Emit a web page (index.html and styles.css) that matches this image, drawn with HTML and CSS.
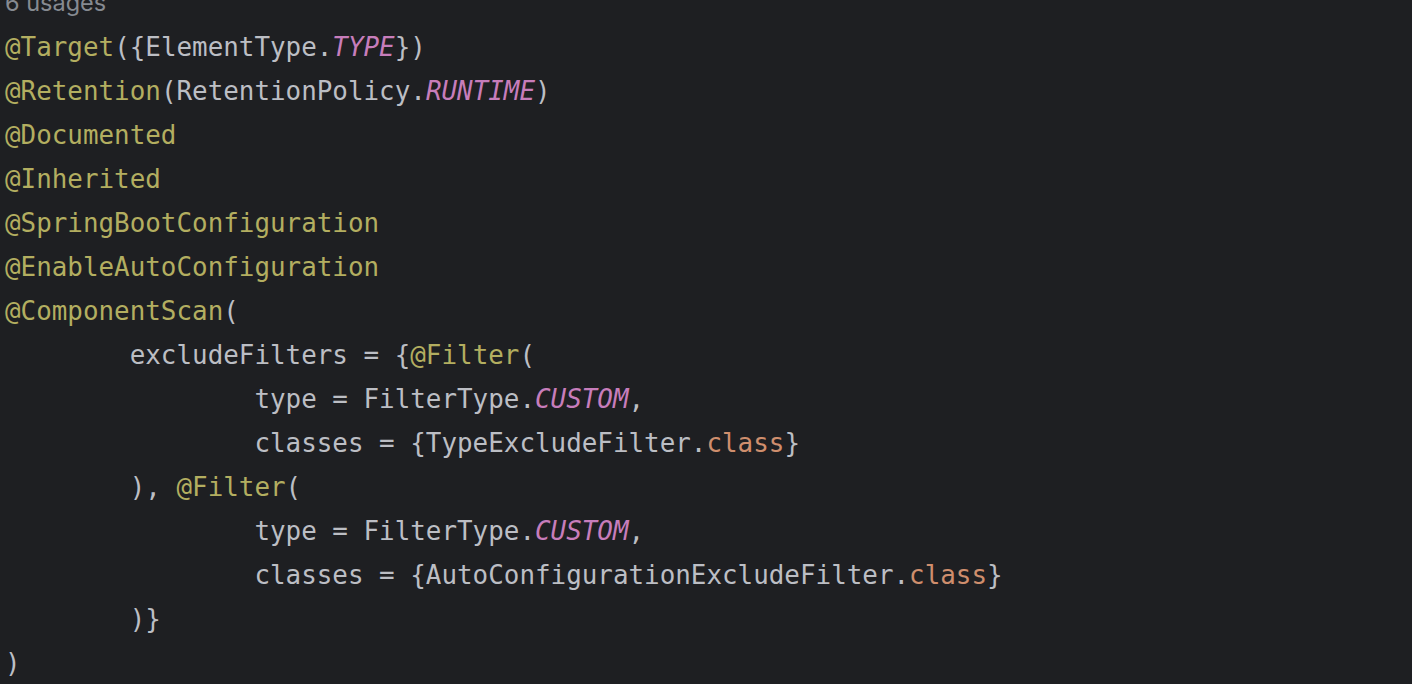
FILE: index.html
```html
<!DOCTYPE html>
<html>
<head>
<meta charset="utf-8">
<link rel="stylesheet" href="styles.css">
</head>
<body>
<div class="editor">
  <div class="usages">6 usages</div>
  <div class="code">
<div class="line"><span class="ann">@Target</span>({ElementType.<span class="const">TYPE</span>})</div>
<div class="line"><span class="ann">@Retention</span>(RetentionPolicy.<span class="const">RUNTIME</span>)</div>
<div class="line"><span class="ann">@Documented</span></div>
<div class="line"><span class="ann">@Inherited</span></div>
<div class="line"><span class="ann">@SpringBootConfiguration</span></div>
<div class="line"><span class="ann">@EnableAutoConfiguration</span></div>
<div class="line"><span class="ann">@ComponentScan</span>(</div>
<div class="line">        excludeFilters = {<span class="ann">@Filter</span>(</div>
<div class="line">                type = FilterType.<span class="const">CUSTOM</span>,</div>
<div class="line">                classes = {TypeExcludeFilter.<span class="kw">class</span>}</div>
<div class="line">        ), <span class="ann">@Filter</span>(</div>
<div class="line">                type = FilterType.<span class="const">CUSTOM</span>,</div>
<div class="line">                classes = {AutoConfigurationExcludeFilter.<span class="kw">class</span>}</div>
<div class="line">        )}</div>
<div class="line">)</div>
  </div>
</div>
</body>
</html>
```
FILE: styles.css
```css
html, body {
  margin: 0;
  padding: 0;
  background: #1e1f22;
  height: 100%;
  overflow: hidden;
}
.editor {
  padding-left: 5px;
}
.usages {
  font-family: Inter, "Noto Sans", sans-serif;
  font-size: 23.5px;
  color: #868a91;
  height: 24px;
  line-height: 24px;
  margin-top: -9px;
  margin-bottom: 10px;
}
.code {
  font-family: "DejaVu Sans Mono", "Liberation Mono", monospace;
  font-size: 25.9px;
  color: #bcbec4;
}
.line {
  white-space: pre;
  height: 44px;
  line-height: 44px;
}
.ann { color: #b3ae60; }
.const { color: #c77dbb; font-style: italic; }
.kw { color: #cf8e6d; }
```
